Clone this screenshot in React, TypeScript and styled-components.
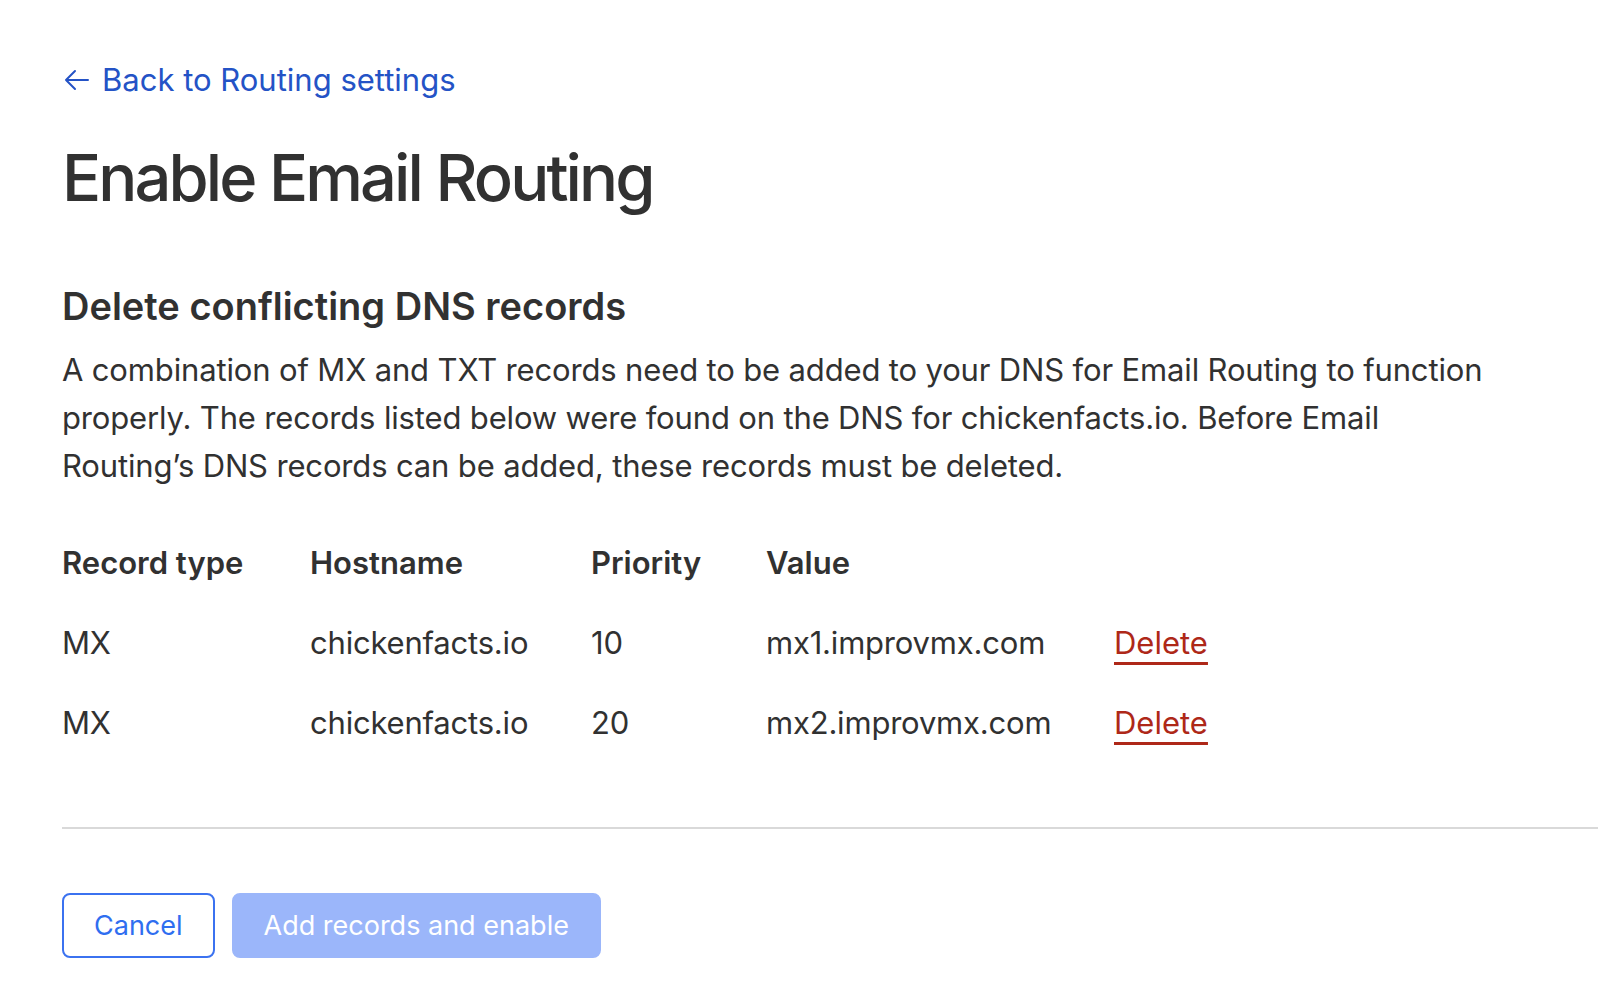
import styled, { createGlobalStyle } from "styled-components";

const GlobalStyle = createGlobalStyle`
  html, body {
    margin: 0;
    padding: 0;
    background: #ffffff;
  }
  body {
    font-family: Inter, "Liberation Sans", sans-serif;
    color: #313131;
    -webkit-font-smoothing: antialiased;
  }
`;

interface IRecord {
  type: string;
  hostname: string;
  priority: number;
  value: string;
}

const records: IRecord[] = [
  { type: "MX", hostname: "chickenfacts.io", priority: 10, value: "mx1.improvmx.com" },
  { type: "MX", hostname: "chickenfacts.io", priority: 20, value: "mx2.improvmx.com" },
];

function App() {
  return (
    <Page>
      <GlobalStyle />
      <BackLink href="#">
        <svg width="26" height="22" viewBox="0 0 26 22" fill="none">
          <path
            d="M24 11H2M11 2L2 11l9 9"
            stroke="currentColor"
            strokeWidth="2"
            strokeLinecap="round"
            strokeLinejoin="round"
          />
        </svg>
        Back to Routing settings
      </BackLink>
      <Title>Enable Email Routing</Title>

      <Heading>Delete conflicting DNS records</Heading>
      <Description>
        A combination of MX and TXT records need to be added to your DNS for Email Routing to function
        properly. The records listed below were found on the DNS for chickenfacts.io. Before Email
        Routing’s DNS records can be added, these records must be deleted.
      </Description>

      <Table>
        <HeadCell>Record type</HeadCell>
        <HeadCell>Hostname</HeadCell>
        <HeadCell>Priority</HeadCell>
        <HeadCell>Value</HeadCell>
        <HeadCell />
        {records.map((r) => (
          <Row key={r.value}>
            <Cell>{r.type}</Cell>
            <Cell>{r.hostname}</Cell>
            <Cell>{r.priority}</Cell>
            <Cell>{r.value}</Cell>
            <Cell>
              <DeleteLink href="#">Delete</DeleteLink>
            </Cell>
          </Row>
        ))}
      </Table>

      <Divider />

      <Actions>
        <Button>Cancel</Button>
        <Button primary disabled>
          Add records and enable
        </Button>
      </Actions>
    </Page>
  );
}

const Page = styled.div`
  padding: 62px 0 0 62px;
  width: 1598px;
  height: 994px;
  box-sizing: border-box;
  overflow: hidden;
`;

const BackLink = styled.a`
  display: inline-flex;
  align-items: center;
  gap: 12px;
  margin-left: 2px;
  font-size: 31px;
  line-height: 36px;
  color: #2453c6;
  text-decoration: none;
`;

const Title = styled.h1`
  margin: 40px 0 0;
  font-size: 65px;
  line-height: 80px;
  font-weight: 500;
  color: #313131;
  letter-spacing: -2.9px;
`;

const Heading = styled.h2`
  margin: 65px 0 0;
  font-size: 38px;
  line-height: 46px;
  font-weight: 600;
  color: #313131;
  letter-spacing: 0;
`;

const Description = styled.p`
  margin: 17px 0 0;
  font-size: 31px;
  line-height: 48px;
  letter-spacing: -0.15px;
  max-width: 1440px;
`;

const Table = styled.div`
  margin-top: 53px;
  display: grid;
  grid-template-columns: 248px 281px 175px 348px auto;
  align-items: center;
  font-size: 31px;
`;

const HeadCell = styled.div`
  font-weight: 600;
  line-height: 40px;
  padding-bottom: 20px;
`;

const Row = styled.div`
  display: contents;
`;

const Cell = styled.div`
  line-height: 40px;
  padding: 20px 0;
  letter-spacing: -0.2px;
`;

const DeleteLink = styled.a`
  color: #ae2818;
  letter-spacing: 0;
  text-decoration: underline;
  text-decoration-thickness: 3px;
  text-underline-offset: 8px;
`;

const Divider = styled.hr`
  margin: 64px 0 0;
  border: none;
  border-top: 2px solid #d9d9d9;
`;

const Actions = styled.div`
  margin-top: 64px;
  display: flex;
  gap: 17px;
`;

const Button = styled.button<{ primary?: boolean }>`
  height: 65px;
  padding: 0 30px;
  border-radius: 8px;
  font-family: Inter, "Liberation Sans", sans-serif;
  font-size: 27px;
  border: 2px solid ${(p) => (p.primary ? "#9bb6fa" : "#3b72f0")};
  background: ${(p) => (p.primary ? "#9bb6fa" : "#ffffff")};
  color: ${(p) => (p.primary ? "#ffffff" : "#2f6ef0")};
  cursor: pointer;
`;

export default App;
